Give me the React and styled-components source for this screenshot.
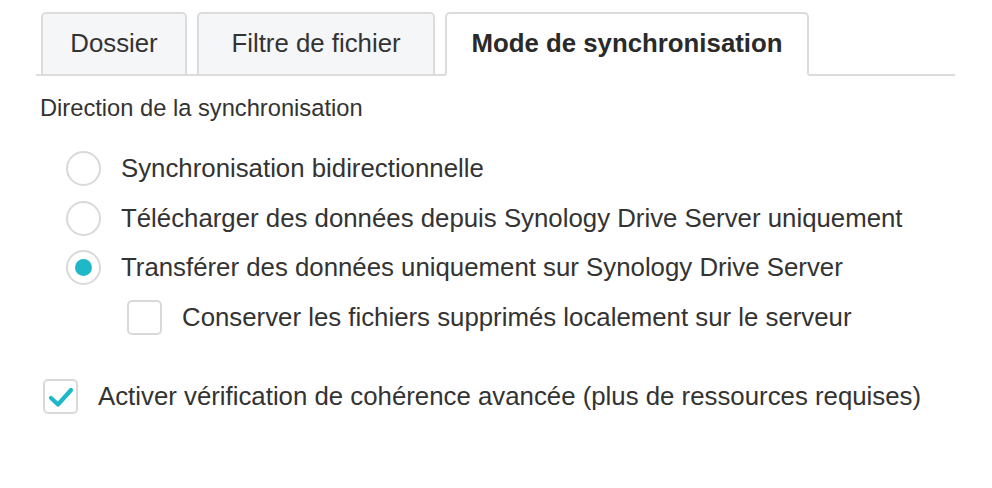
import styled, { createGlobalStyle } from "styled-components";

const GlobalStyle = createGlobalStyle`
  body {
    margin: 0;
    background: #ffffff;
    font-family: "Liberation Sans", Arial, sans-serif;
    color: #333333;
  }
`;

const Panel = styled.div`
  width: 919px;
  padding: 12px 0 0 36px;
`;

const TabBar = styled.div`
  display: flex;
  gap: 10px;
  padding-left: 5px;
  border-bottom: 2px solid #dcdcdc;
`;

const Tab = styled.div`
  box-sizing: border-box;
  width: ${(p) => p.$width}px;
  height: 64px;
  margin-bottom: -2px;
  display: flex;
  align-items: center;
  justify-content: center;
  font-size: 25.8px;
  font-weight: ${(p) => (p.$active ? 700 : 400)};
  color: ${(p) => (p.$active ? "#2a2a2a" : "#333333")};
  background: ${(p) => (p.$active ? "#ffffff" : "#f5f6f8")};
  border: 2px solid #dcdcdc;
  border-bottom: ${(p) => (p.$active ? "2px solid #ffffff" : "2px solid #dcdcdc")};
  border-radius: 5px 5px 0 0;
  padding-bottom: 2px;
`;

const SectionTitle = styled.div`
  margin-top: 17px;
  padding-left: 4px;
  font-size: 23.7px;
  line-height: 30px;
`;

const Options = styled.div`
  margin-top: 21px;
  display: flex;
  flex-direction: column;
`;

const Row = styled.label`
  display: flex;
  align-items: center;
  gap: 20px;
  height: 49.5px;
  padding-left: ${(p) => p.$indent}px;
  font-size: 25.8px;
`;

const Radio = styled.span`
  box-sizing: border-box;
  width: 35px;
  height: 35px;
  border-radius: 50%;
  border: 2px solid #d9d9d9;
  background: #fff;
  display: flex;
  align-items: center;
  justify-content: center;
  flex-shrink: 0;

  &::after {
    content: "";
    width: 17px;
    height: 17px;
    border-radius: 50%;
    background: #1fb8c8;
    display: ${(p) => (p.$checked ? "block" : "none")};
  }
`;

const Box = styled.span`
  box-sizing: border-box;
  width: 35px;
  height: 35px;
  border-radius: 5px;
  border: 2px solid #d9d9d9;
  background: #fff;
  display: flex;
  align-items: center;
  justify-content: center;
  flex-shrink: 0;
`;

const Advanced = styled.div`
  margin-top: 30px;
`;

function Check() {
  return (
    <svg width="26" height="22" viewBox="0 0 26 22">
      <path
        d="M3 12 L10 18.5 L23 4"
        fill="none"
        stroke="#1fb8c8"
        strokeWidth="4.2"
        strokeLinecap="round"
        strokeLinejoin="round"
      />
    </svg>
  );
}

export default function App() {
  return (
    <>
      <GlobalStyle />
      <Panel>
        <TabBar>
          <Tab $width={146}>Dossier</Tab>
          <Tab $width={238}>Filtre de fichier</Tab>
          <Tab $width={364} $active>
            Mode de synchronisation
          </Tab>
        </TabBar>
        <SectionTitle>Direction de la synchronisation</SectionTitle>
        <Options>
          <Row $indent={30}>
            <Radio />
            Synchronisation bidirectionnelle
          </Row>
          <Row $indent={30}>
            <Radio />
            Télécharger des données depuis Synology Drive Server uniquement
          </Row>
          <Row $indent={30}>
            <Radio $checked />
            Transférer des données uniquement sur Synology Drive Server
          </Row>
          <Row $indent={91}>
            <Box />
            Conserver les fichiers supprimés localement sur le serveur
          </Row>
        </Options>
        <Advanced>
          <Row $indent={7}>
            <Box>
              <Check />
            </Box>
            Activer vérification de cohérence avancée (plus de ressources requises)
          </Row>
        </Advanced>
      </Panel>
    </>
  );
}
